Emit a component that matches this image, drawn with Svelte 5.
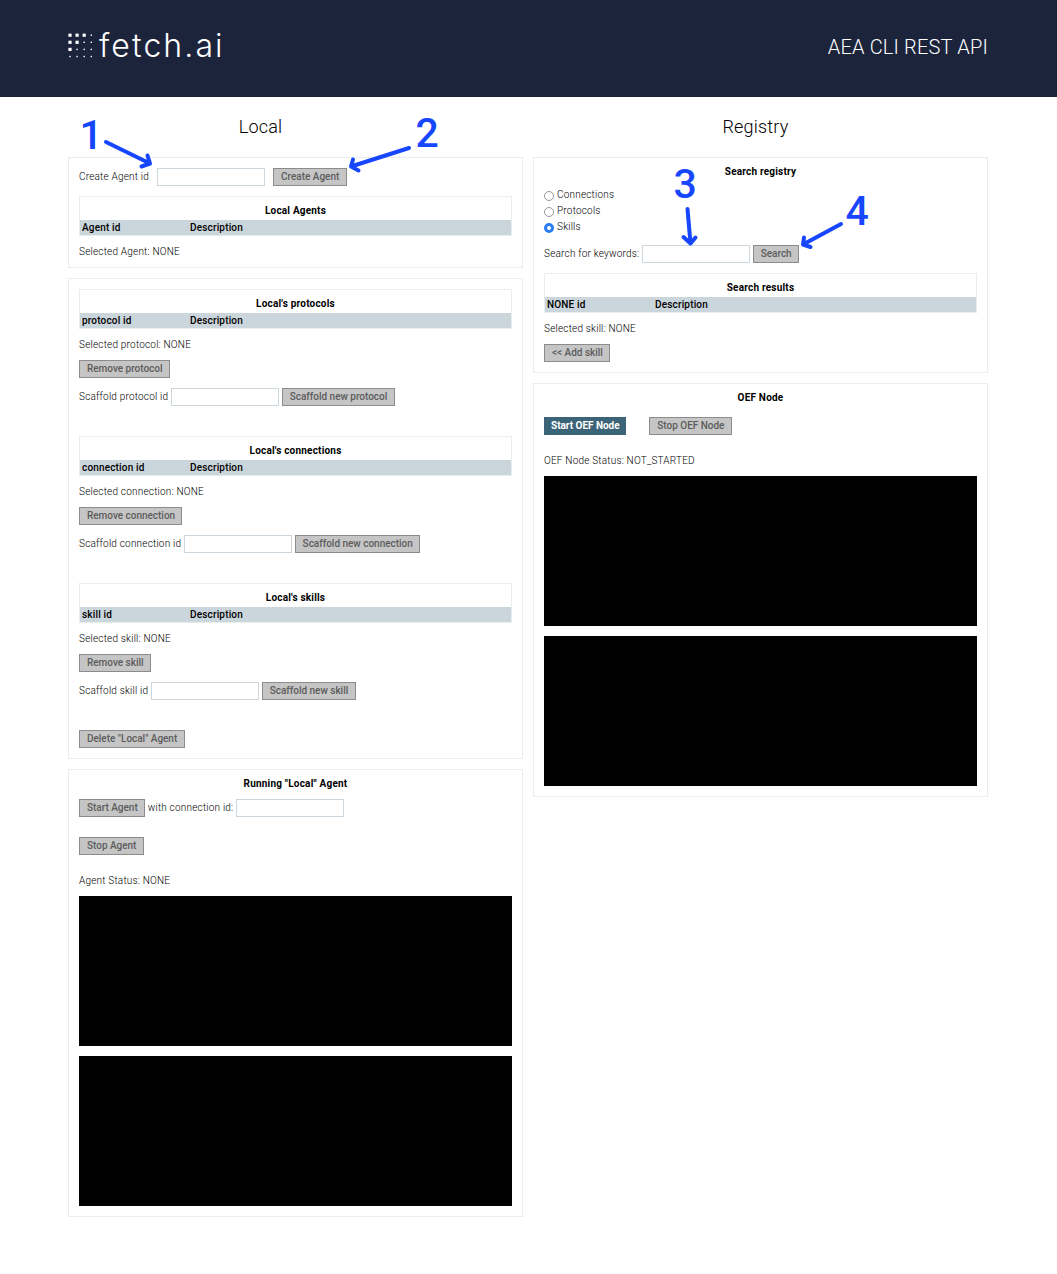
<script>
  const LOCAL_ITEMS = ['protocol', 'connection', 'skill'];
  const KINDS = ['Connections', 'Protocols', 'Skills'];
  let kind = $state('Skills');

  // Logo mark: dot sizes shrink towards the lower right corner
  const dots = [
    [3.2, 3.2, 3.2, 1.4],
    [3.2, 3.2, 1.4, 1.4],
    [3.2, 1.4, 1.4, 1.4],
    [1.4, 1.4, 1.4, 1.4],
  ];

  const notes = [
    { n: '1', x: 79.5, y: 148.5, d: 'M106 142L150 163.5M147.5 155.5L150 163.5L141.5 166.5' },
    { n: '2', x: 415.5, y: 147, d: 'M409 148L351 166.5M353 159.5L351 166.5L358.5 170.5' },
    { n: '3', x: 673.5, y: 198, d: 'M687.5 209L690.5 243.5M683.5 237L690.5 243.5L695.5 237.5' },
    { n: '4', x: 845.5, y: 225, d: 'M841 224L803 244.5M804 237.5L803 244.5L810.5 247' },
  ];
</script>

{#snippet table(title, idLabel)}
  <div class="table">
    <div class="caption">{title}</div>
    <div class="head"><span>{idLabel} id</span><span>Description</span></div>
  </div>
{/snippet}

<header>
  <div class="logo">
    <svg width="25" height="26" viewBox="0 0 25 26">
      {#each dots as row, r}
        {#each row as s, c}
          <rect x={2 + c * 7.1 - s / 2} y={2.2 + r * 7.1 - s / 2} width={s} height={s} fill="#fff" />
        {/each}
      {/each}
    </svg>
    <span class="brand">fetch.ai</span>
  </div>
  <div class="app-title">AEA CLI REST API</div>
</header>

<main>
  <section class="column">
    <h2>Local</h2>

    <div class="panel">
      <div class="row wide"><label for="agent">Create Agent id</label><input id="agent" /><button disabled>Create Agent</button></div>
      {@render table('Local Agents', 'Agent')}
      <p>Selected Agent: NONE</p>
    </div>

    <div class="panel">
      {#each LOCAL_ITEMS as item}
        <div class="group">
          {@render table(`Local's ${item}s`, item)}
          <p>Selected {item}: NONE</p>
          <div class="row"><button disabled>Remove {item}</button></div>
          <div class="row"><label for={item}>Scaffold {item} id</label><input id={item} /><button disabled>Scaffold new {item}</button></div>
        </div>
      {/each}
      <div class="row"><button disabled>Delete "Local" Agent</button></div>
    </div>

    <div class="panel">
      <h3>Running "Local" Agent</h3>
      <div class="row"><button disabled>Start Agent</button><label for="conn">with connection id:</label><input id="conn" /></div>
      <div class="row spaced"><button disabled>Stop Agent</button></div>
      <p>Agent Status: NONE</p>
      <div class="console"></div>
      <div class="console"></div>
    </div>
  </section>

  <section class="column">
    <h2>Registry</h2>

    <div class="panel">
      <h3>Search registry</h3>
      <div class="radios">
        {#each KINDS as k}
          <label><input type="radio" name="kind" value={k} bind:group={kind} />{k}</label>
        {/each}
      </div>
      <div class="row"><label for="kw">Search for keywords:</label><input id="kw" /><button disabled>Search</button></div>
      {@render table('Search results', 'NONE')}
      <p>Selected skill: NONE</p>
      <div class="row"><button disabled>&lt;&lt; Add skill</button></div>
    </div>

    <div class="panel">
      <h3>OEF Node</h3>
      <div class="row node"><button>Start OEF Node</button><button disabled>Stop OEF Node</button></div>
      <p>OEF Node Status: NOT_STARTED</p>
      <div class="console"></div>
      <div class="console"></div>
    </div>
  </section>
</main>

<svg class="notes" width="1057" height="300" viewBox="0 0 1057 300">
  {#each notes as note}
    <text x={note.x} y={note.y}>{note.n}</text>
    <path d={note.d} />
  {/each}
</svg>

<style>
  :global(body) {
    background: #fff;
    color: #000;
    font-family: Roboto, 'Liberation Sans', sans-serif;
    font-weight: 300;
    font-size: 10px;
    line-height: 11px;
    letter-spacing: 0.2px;
  }
  :global(#app) { position: relative; min-height: 1274px; }
  header {
    height: 97px;
    padding: 0 69px 0 68px;
    box-sizing: border-box;
    background: #1c243c;
    color: #fff;
    display: flex;
    align-items: center;
    justify-content: space-between;
  }
  .logo { display: flex; align-items: center; gap: 6px; height: 26px; margin-bottom: 5px; }
  .brand { font: 300 32px/26px Inter, sans-serif; letter-spacing: 2.1px; }
  .app-title { font-size: 20px; line-height: 24px; letter-spacing: 0.17px; padding-bottom: 4px; }

  main { display: flex; gap: 10px; padding: 0 69px 0 68px; }
  .column { width: 455px; display: flex; flex-direction: column; gap: 10px; }
  h2 {
    height: 50px;
    margin: 0;
    padding-right: 70px;
    line-height: 60px;
    text-align: center;
    font-size: 18px;
    font-weight: 300;
  }
  .column + .column h2 { padding-right: 10px; }
  .panel {
    border: 1px solid #e8edee;
    padding: 10px;
    display: flex;
    flex-direction: column;
    gap: 10px;
  }
  h3 {
    margin: -2px 0 0;
    font-size: 10px;
    line-height: 11px;
    font-weight: 700;
    text-align: center;
  }
  p { margin: 0; }
  .group { display: flex; flex-direction: column; gap: 10px; margin-bottom: 20px; }
  .row { display: flex; align-items: center; gap: 2.7px; height: 18px; white-space: nowrap; }
  .row label { line-height: 16px; }
  .row.wide { gap: 8px; }
  .row.node { gap: 23px; margin: 4px 0 10px; }
  .row.spaced { margin: 10px 0; }
  input {
    width: 108px;
    height: 18px;
    margin: 0;
    padding: 0 4px;
    box-sizing: border-box;
    border: 1px solid #ccd6dd;
    background: #fff;
    font: inherit;
  }
  button {
    height: 18px;
    padding: 0 6.3px 0 7px;
    border: 1px solid #3b6478;
    border-radius: 0;
    background: #3b6478;
    color: #fff;
    font: 500 10px/16px Roboto, sans-serif;
    letter-spacing: -0.02px;
  }
  button:not(:disabled) { padding: 0 5.7px 0 6px; font-weight: 700; }
  button:disabled { background: #c5c5c5; border-color: #8c8c8c; color: #5c5c5c; }
  .table { border: 1px solid #e8edee; }
  .caption { height: 23px; line-height: 28px; font-weight: 700; text-align: center; }
  .head {
    display: grid;
    grid-template-columns: 108px 1fr;
    height: 15px;
    padding-left: 2px;
    line-height: 15px;
    font-weight: 500;
    letter-spacing: 0.17px;
    background: #cbd5dc;
  }
  .radios { display: flex; flex-direction: column; margin: -1px 0 1px; }
  .radios label { display: flex; align-items: center; gap: 3px; height: 16px; }
  .radios input {
    appearance: none;
    width: 10px;
    height: 10px;
    padding: 0;
    margin-top: 3px;
    border: 1px solid #999;
    border-radius: 50%;
  }
  .radios input:checked { border: 3px solid #2a7cf5; }
  .console { height: 150px; background: #000; }
  .notes { position: absolute; left: 0; top: 0; pointer-events: none; }
  .notes text { font: 500 41px Roboto, sans-serif; letter-spacing: 0; fill: #1746ff; }
  .notes path { fill: none; stroke: #1746ff; stroke-width: 4; stroke-linecap: round; stroke-linejoin: round; }
</style>
